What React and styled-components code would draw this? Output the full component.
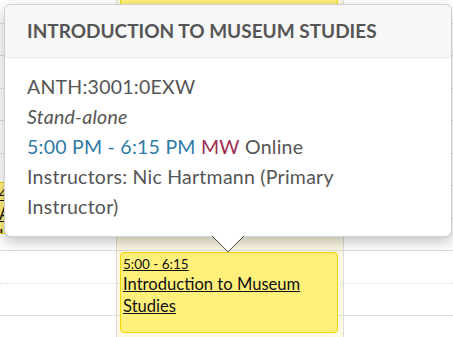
import React from 'react'
import styled, {createGlobalStyle} from 'styled-components'

const GlobalStyle = createGlobalStyle`
    html, body {
      margin: 0;
      padding: 0;
      background: #fff;
    }
    body {
      font-family: "Source Sans Pro", Lato, "Noto Sans", sans-serif;
      color: #555;
    }
`

const HOUR = 65
const ORIGIN = 251 // y of 5:00 PM
const yAt = (min) => ORIGIN + (min * HOUR) / 60

const columns = [
    {width: '116px', today: false, inset: -4, events: [{start: -65, end: -17, time: '4:00 - 4:45', title: 'Archaeology Lab'}]},
    {width: '227px', today: true, inset: 3, events: [
        {start: -275, end: -227, time: '1:00 - 1:45', title: 'Seminar'},
        {start: 0, end: 75, time: '5:00 - 6:15', title: 'Introduction to Museum Studies'},
    ]},
    {width: '1fr', today: false, inset: 3, events: [{start: -84, end: -15, time: '3:30 - 4:45', title: 'Field Methods'}]},
]

const Page = styled.div`
    position: relative;
    width: 453px;
    height: 337px;
    overflow: hidden;
`

const Calendar = styled.div`
    display: grid;
    grid-template-columns: ${p => p.$cols};
    height: 100%;
`

const Column = styled.div`
    position: relative;
    background: ${p => p.$today ? '#fcf8e3' : '#fff'};
    & + & {
      border-left: 1px solid #ddd;
    }
`

const Slots = styled.div`
    margin-top: -9px;
    display: flex;
    flex-direction: column;
`

const Slot = styled.div`
    box-sizing: border-box;
    height: 32.5px;
    border-bottom: 1px ${p => p.$half ? 'dotted' : 'solid'} #ddd;
`

const Event = styled.a`
    position: absolute;
    left: ${p => p.$inset}px;
    right: 5px;
    box-sizing: border-box;
    padding: 2px 2px;
    background: #fff07c;
    border: 1px solid #f1d800;
    border-radius: 4px;
    color: #111;
    text-decoration: underline;
    overflow: hidden;
    span {
      display: block;
    }
    .time {
      font-size: 13.5px;
      line-height: 18px;
    }
    .title {
      font-size: 16.6px;
      line-height: 22px;
    }
`

const Popover = styled.div`
    position: absolute;
    left: 4px;
    top: 4px;
    width: 448px;
    box-sizing: border-box;
    background: #fff;
    border: 1px solid rgba(0, 0, 0, .18);
    border-radius: 7px;
    box-shadow: 0 5px 14px rgba(0, 0, 0, .25);
    ::before, ::after {
      content: "";
      position: absolute;
      left: 223px;
      border-style: solid;
      border-color: transparent;
      transform: translateX(-50%);
    }
    ::before {
      bottom: -16px;
      border-width: 16px 16px 0;
      border-top-color: rgba(0, 0, 0, .2);
    }
    ::after {
      bottom: -15px;
      border-width: 15px 15px 0;
      border-top-color: #fff;
    }
`

const Header = styled.h3`
    margin: 0;
    padding: 14px 22px;
    background: #f7f7f7;
    border-bottom: 1px solid #ebebeb;
    border-radius: 6px 6px 0 0;
    font-size: 19px;
    line-height: 24px;
    font-weight: 700;
    color: #555;
    text-transform: uppercase;
`

const Body = styled.div`
    padding: 14px 22px;
    font-size: 19.5px;
    letter-spacing: 0.25px;
    line-height: 30px;
    color: #555;
    > div {
      max-width: 340px;
    }
    em {
      font-style: italic;
    }
`

const Time = styled.span`
    color: #2f7aa6;
`

const Days = styled.span`
    color: #9c2d4e;
`

const App = () => (
    <Page>
        <GlobalStyle/>
        <Calendar $cols={columns.map(c => c.width).join(' ')}>
            {columns.map((col, i) => (
                <Column key={i} $today={col.today}>
                    <Slots>
                        {Array.from({length: 12}, (_, n) => <Slot key={n} $half={n % 2 === 0}/>)}
                    </Slots>
                    {col.events.map((ev, j) => (
                        <Event key={j} $inset={col.inset}
                               style={{top: yAt(ev.start) + 1, height: yAt(ev.end) - yAt(ev.start)}}>
                            <span className="time">{ev.time}</span>
                            <span className="title">{ev.title}</span>
                        </Event>
                    ))}
                </Column>
            ))}
        </Calendar>
        <Popover>
            <Header>Introduction to Museum Studies</Header>
            <Body>
                <div>ANTH:3001:0EXW</div>
                <div><em>Stand-alone</em></div>
                <div><Time>5:00 PM - 6:15 PM</Time> <Days>MW</Days> Online</div>
                <div>Instructors: Nic Hartmann (Primary Instructor)</div>
            </Body>
        </Popover>
    </Page>
)

export default App
